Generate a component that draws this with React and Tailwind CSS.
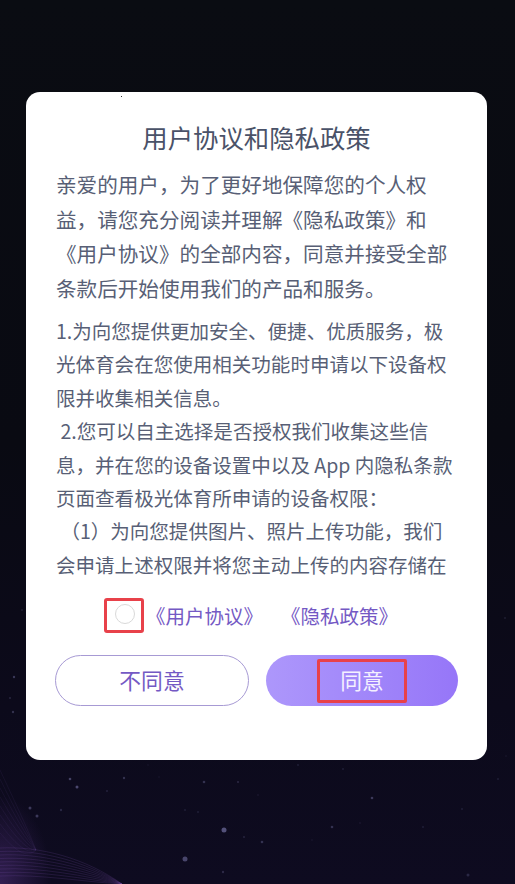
const STARS = [
  [14,677,2.4,0.3],[10,698,2,0.18],[13,712,2.4,0.25],[70,779,2.6,0.35],[77,787,3,0.4],[124,778,2.4,0.25],[107,791,2,0.15],[204,782,2.6,0.25],[238,782,2,0.2],[159,777,1.5,0.1],[30,808,3,0.3],[37,816,3,0.3],[61,810,2.4,0.18],[224,830,5,0.45],[185,859,5,0.38],[332,827,2.6,0.25],[262,842,2.6,0.25],[372,798,2.6,0.3],[223,872,2.4,0.2],[468,875,3,0.18],[185,810,2,0.12],[198,812,2,0.12],[244,837,2,0.16],[258,795,1.6,0.12],[312,840,1.6,0.1],[360,823,1.6,0.12],[423,827,2,0.12],[462,809,2,0.12],[498,779,2,0.12],[505,618,2,0.12],[22,610,2,0.12],[298,765,2,0.12],[343,769,2,0.12],[148,765,1.5,0.1],[506,756,1.6,0.1],[342,750,1.5,0.1],
];

function Backdrop() {
  return (
    <svg className="absolute inset-0 h-full w-full" viewBox="0 0 515 884" fill="none">
      <defs>
        <linearGradient id="bg" x1="0" y1="0" x2="0" y2="1">
          <stop offset="0" stopColor="#0a0c12" />
          <stop offset="0.5" stopColor="#090a12" />
          <stop offset="0.8" stopColor="#0c0a1b" />
          <stop offset="1" stopColor="#0e0b20" />
        </linearGradient>
        <radialGradient id="corner" cx="0" cy="1" r="0.1">
          <stop offset="0" stopColor="#6b3fa0" stopOpacity="0.4" />
          <stop offset="1" stopColor="#6b3fa0" stopOpacity="0" />
        </radialGradient>
      </defs>
      <rect width="515" height="884" fill="url(#bg)" />
      <rect width="515" height="884" fill="url(#corner)" />
      {[0,1,2,3,4,5,6,7,8].map((i) => (
        <path key={i} d={`M0 ${848 + i * 3.5} C40 ${846 + i * 3.5} 85 ${858 + i * 3} 122 884`} stroke="#8a5cc0" strokeOpacity="0.28" strokeWidth="0.6" />
      ))}
      {[0,1,2,3,4,5,6,7].map((i) => (
        <path key={i} d={`M0 ${770 + i * 9} C14 ${800 + i * 7} 26 ${825 + i * 5} 36 850`} stroke="#8a5cc0" strokeOpacity="0.14" strokeWidth="0.6" />
      ))}
      {STARS.map(([x, y, s, o], i) => (
        <circle key={i} cx={x} cy={y} r={s / 2} fill="#a9a6e8" fillOpacity={o} />
      ))}
    </svg>
  );
}

export default function App() {
  return (
    <div className="relative h-[884px] w-[515px] overflow-hidden bg-[#0a0c12] pt-[92px] pl-[26px] font-['Noto_Sans_CJK_SC','Noto_Sans',sans-serif]">
      <Backdrop />
      <div className="relative flex h-[668px] w-[461px] flex-col rounded-[14px] bg-white px-[30px] pt-[26px]">
        <span className="absolute top-[4px] left-[95px] h-px w-px bg-[#333333]" />
        <h1 className="text-center text-[25.4px] leading-[38px] font-normal text-[#4a5268]">用户协议和隐私政策</h1>
        <div className="mt-[11px] text-[#585f76]">
          <p className="text-[20.6px] leading-[34.5px]">
            亲爱的用户，为了更好地保障您的个人权<br />
            益，请您充分阅读并理解《隐私政策》和<br />
            《用户协议》的全部内容，同意并接受全部<br />
            条款后开始使用我们的产品和服务。
          </p>
          <div className="mt-[9px] text-[19.55px] leading-[33.4px]">
            <p>
              1.为向您提供更加安全、便捷、优质服务，极<br />
              光体育会在您使用相关功能时申请以下设备权<br />
              限并收集相关信息。
            </p>
            <p>
              &nbsp;2.您可以自主选择是否授权我们收集这些信<br />
              息，并在您的设备设置中以及 App 内隐私条款<br />
              页面查看极光体育所申请的设备权限：
            </p>
            <p>
              &nbsp;（1）为向您提供图片、照片上传功能，我们<br />
              会申请上述权限并将您主动上传的内容存储在
            </p>
          </div>
        </div>

        <div className="mt-[17px] flex items-center justify-center pr-[11px] text-[19.5px] leading-[30px] text-[#7459c4]">
          <span className="mr-[2px] flex h-[35px] w-[40px] items-center justify-center rounded-[3px] border-[3.5px] border-[#e8414a]">
            <span className="mb-[3px] ml-[2px] h-[20px] w-[20px] rounded-full border border-[#d9d9d9] bg-white" />
          </span>
          <span>《用户协议》</span>
          <span className="ml-[18px]">《隐私政策》</span>
        </div>

        <div className="mt-[22px] -ml-px flex w-[403px] items-center justify-between">
          <button className="flex h-[51px] w-[194px] items-center justify-center rounded-full border border-[#a79ad4] bg-white text-[21.8px] text-[#7459c4]">不同意</button>
          <button className="flex h-[51px] w-[192px] items-center justify-center rounded-full bg-gradient-to-r from-[#ad97fb] to-[#9676f8]">
            <span className="flex h-[44px] w-[90px] items-center justify-center rounded-[2px] border-[3.5px] border-[#e8414a] text-[21.8px] text-[#f4f0ff]">同意</span>
          </button>
        </div>
      </div>
    </div>
  );
}
